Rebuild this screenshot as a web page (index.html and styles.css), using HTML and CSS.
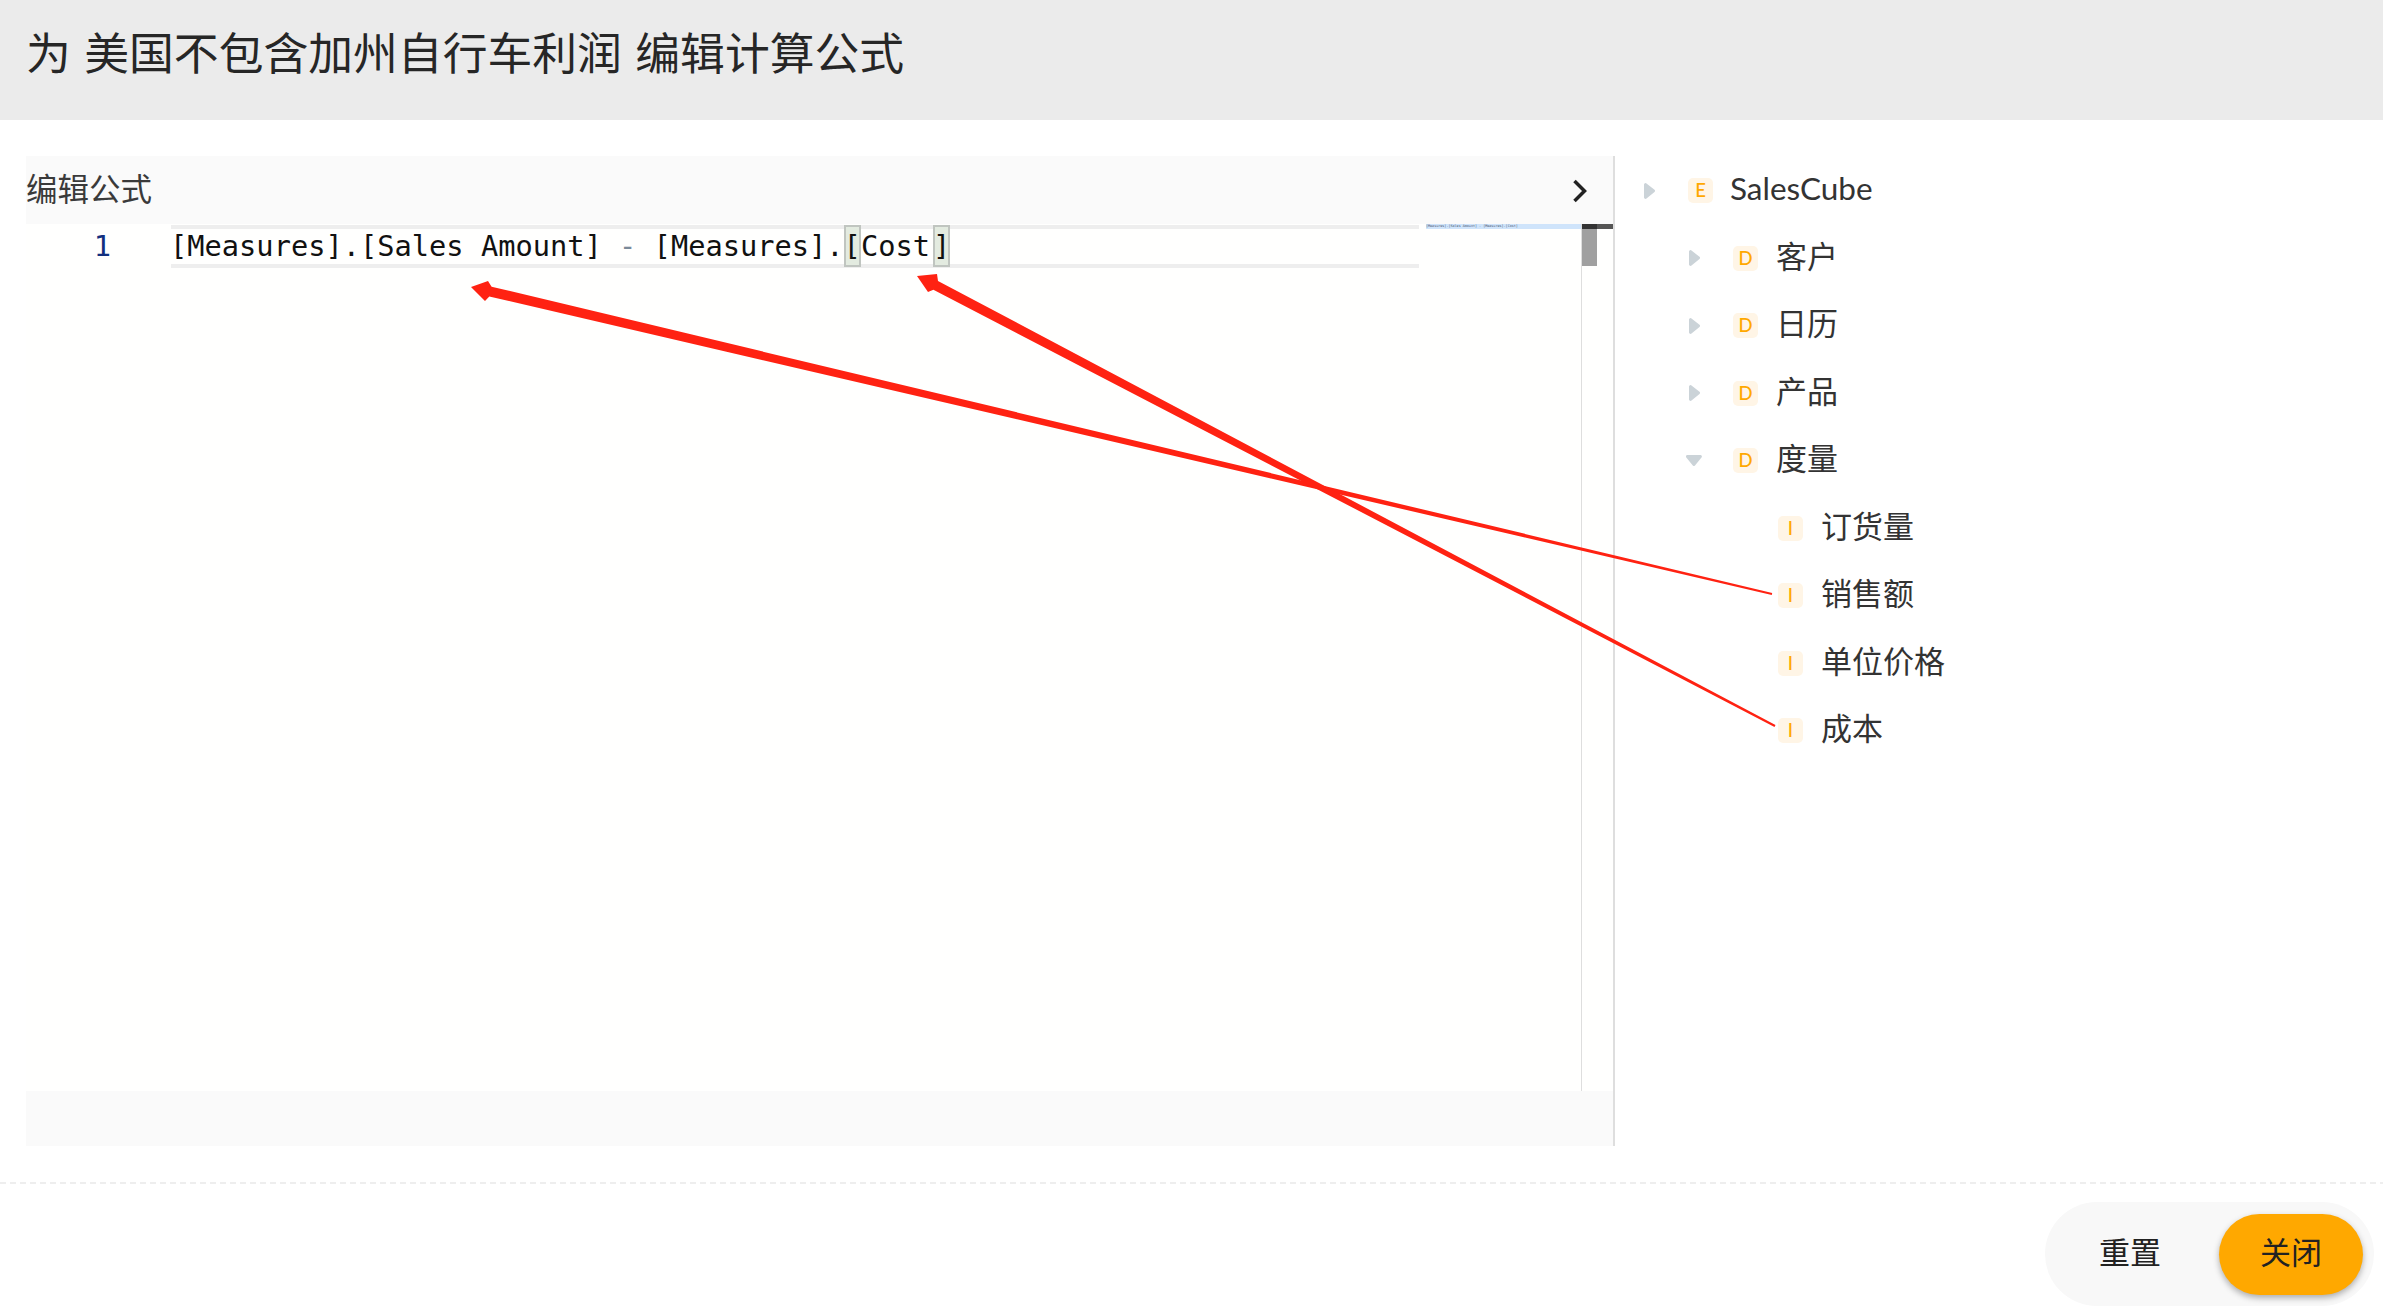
FILE: index.html
```html
<!DOCTYPE html>
<html lang="zh-CN">
<head>
<meta charset="utf-8">
<title>编辑计算公式</title>
<link rel="stylesheet" href="styles.css">
</head>
<body>
<div class="dialog">
  <header class="dialog-head">为 美国不包含加州自行车利润 编辑计算公式</header>
  <main class="dialog-main">
    <section class="editor-panel">
      <div class="editor-title">
        <span class="editor-label">编辑公式</span>
        <svg class="chevron" width="16" height="24" viewBox="0 0 16 24"><path d="M2.500 2l10 10-10 10" fill="none" stroke="#222" stroke-width="3.500"/></svg>
      </div>
      <div class="editor-body">
        <div class="gutter">1</div>
        <div class="code-area">
          <div class="code-line"><span>[Measures].[Sales Amount] </span><span class="op">-</span><span> [Measures].</span><span class="match">[</span><span>Cost</span><span class="match match-end">]</span></div>
        </div>
        <div class="minimap"><div class="minimap-line">[Measures].[Sales Amount] - [Measures].[Cost]</div></div>
        <div class="scrollbar">
          <div class="scroll-cap"><i></i></div>
          <div class="scroll-thumb"></div>
        </div>
      </div>
      <div class="editor-foot"></div>
    </section>
    <nav class="tree">
      <div class="row level-1"><span class="caret"><svg width="11" height="16" viewBox="0 0 11 16"><path d="M0 1.500v13a1.500 1.500 0 0 0 2.500 1l8-6.500a1.500 1.500 0 0 0 0-2.200l-8-6.300A1.500 1.500 0 0 0 0 1.500z" fill="#cbd3d8"/></svg></span><span class="badge">E</span><span class="name latin">SalesCube</span></div>
      <div class="row level-2"><span class="caret"><svg width="11" height="16" viewBox="0 0 11 16"><path d="M0 1.500v13a1.500 1.500 0 0 0 2.500 1l8-6.500a1.500 1.500 0 0 0 0-2.200l-8-6.300A1.500 1.500 0 0 0 0 1.500z" fill="#cbd3d8"/></svg></span><span class="badge">D</span><span class="name">客户</span></div>
      <div class="row level-2"><span class="caret"><svg width="11" height="16" viewBox="0 0 11 16"><path d="M0 1.500v13a1.500 1.500 0 0 0 2.500 1l8-6.500a1.500 1.500 0 0 0 0-2.200l-8-6.300A1.500 1.500 0 0 0 0 1.500z" fill="#cbd3d8"/></svg></span><span class="badge">D</span><span class="name">日历</span></div>
      <div class="row level-2"><span class="caret"><svg width="11" height="16" viewBox="0 0 11 16"><path d="M0 1.500v13a1.500 1.500 0 0 0 2.500 1l8-6.500a1.500 1.500 0 0 0 0-2.200l-8-6.300A1.500 1.500 0 0 0 0 1.500z" fill="#cbd3d8"/></svg></span><span class="badge">D</span><span class="name">产品</span></div>
      <div class="row level-2"><span class="caret"><svg class="down" width="16" height="11" viewBox="0 0 16 11"><path d="M1.500 0h13a1.500 1.500 0 0 1 1 2.500l-6.500 8a1.500 1.500 0 0 1-2.200 0L.3 2.500A1.500 1.500 0 0 1 1.500 0z" fill="#cbd3d8"/></svg></span><span class="badge">D</span><span class="name">度量</span></div>
      <div class="row level-3"><span class="caret"></span><span class="badge">I</span><span class="name">订货量</span></div>
      <div class="row level-3"><span class="caret"></span><span class="badge">I</span><span class="name">销售额</span></div>
      <div class="row level-3"><span class="caret"></span><span class="badge">I</span><span class="name">单位价格</span></div>
      <div class="row level-3"><span class="caret"></span><span class="badge">I</span><span class="name">成本</span></div>
    </nav>
  </main>
  <div class="dash"></div>
  <footer class="dialog-foot">
    <div class="btn-group">
      <button class="btn btn-reset"><span class="btn-text">重置</span></button>
      <button class="btn btn-close"><span class="btn-text">关闭</span></button>
    </div>
  </footer>
  <svg class="arrows" width="2383" height="1315" viewBox="0 0 2383 1315">
    <polygon fill="#ff2212" points="471,287 488,281 491.600,286.700 1772.200,593 1771.800,595 489.300,296.500 485,301"/>
    <polygon fill="#ff2212" points="917,276 937,274 938,280.900 1775.500,725.100 1774.500,726.900 933.400,289.700 928,292"/>
  </svg>
</div>
</body>
</html>
```
FILE: styles.css
```css
* { box-sizing: border-box; }
html, body { margin: 0; padding: 0; background: #fff; }
body {
  font-family: Lato, "Noto Sans CJK SC", sans-serif;
  color: #2b2b2b;
}
.dialog {
  position: relative;
  width: 2383px;
  height: 1315px;
  overflow: hidden;
  display: flex;
  flex-direction: column;
}
.dialog-head {
  height: 120px;
  flex: none;
  background: #ebebeb;
  padding: 0 0 20px 26px;
  display: flex;
  align-items: center;
  font-size: 44.800px;
  font-weight: 400;
  word-spacing: 2px;
  color: #262626;
  white-space: pre;
}
.dialog-main {
  flex: none;
  height: 990px;
  margin-top: 36px;
  display: flex;
}
.editor-panel {
  width: 1589px;
  margin-left: 26px;
  border-right: 2px solid #dedede;
  display: flex;
  flex-direction: column;
}
.editor-title {
  height: 68px;
  flex: none;
  background: #fafafa;
  display: flex;
  align-items: center;
  justify-content: space-between;
  padding: 0 25px 0 0;
  font-size: 31.500px;
  color: #3a3a3a;
}
.editor-label { margin-bottom: 7px; }
.chevron { margin-top: 1px; }
.editor-body {
  flex: 1;
  background: #fffffe;
  display: flex;
  min-height: 0;
}
.gutter {
  width: 145px;
  flex: none;
  padding: 5px 60px 0 0;
  text-align: right;
  font-family: "DejaVu Sans Mono", monospace;
  font-size: 28.700px;
  line-height: 34px;
  color: #12307f;
}
.code-area { width: 1248px; flex: none; }
.code-line {
  height: 43px;
  margin-top: 1px;
  border-top: 4px solid #eeeeee;
  border-bottom: 4px solid #eeeeee;
  font-family: "DejaVu Sans Mono", monospace;
  font-size: 28.700px;
  line-height: 34px;
  white-space: pre;
  color: #111;
  text-indent: -1px;
}
.op { color: #7a8a99; }
.match { position: relative; display: inline-block; z-index: 0; text-indent: 0; }
.match-end { margin-left: 3px; }
.match::before {
  content: "";
  position: absolute;
  z-index: -1;
  left: 0;
  right: 0;
  top: -4px;
  bottom: -4px;
  background: #e3ebe0;
  border: 2px solid #c0c5c0;
}
.minimap { width: 155px; flex: none; margin-left: 7px; }
.minimap-line {
  height: 5px;
  background: #cfe4fb;
  font-family: "DejaVu Sans Mono", monospace;
  font-size: 3.400px;
  line-height: 5px;
  color: #4a5670;
  white-space: pre;
}
.scrollbar {
  flex: 1;
  border-left: 1px solid #dedede;
}
.scroll-cap { height: 5px; background: #555; }
.scroll-cap i { display: block; width: 15px; height: 5px; background: #333; }
.scroll-thumb { width: 15px; height: 37px; background: #a0a0a0; }
.editor-foot { height: 55px; flex: none; background: #fafafa; }
.tree {
  flex: 1;
  padding: 1px 0 0 29px;
}
.row {
  height: 67.500px;
  display: flex;
  align-items: center;
  font-size: 31px;
  color: #333;
}
.level-2 { padding-left: 45px; }
.level-3 { padding-left: 90px; }
.caret {
  width: 44px;
  flex: none;
  display: flex;
  align-items: center;
}
.caret .down { margin-left: -3px; }
.badge {
  width: 25px;
  height: 25px;
  flex: none;
  border-radius: 5px;
  background: #fff5e6;
  color: #ffa800;
  font-family: Lato, sans-serif;
  font-size: 18.500px;
  font-weight: 500;
  line-height: 25px;
  text-align: center;
}
.name { margin: 0 0 8px 18px; }
.latin { font-size: 31.500px; margin: 0 0 6px 17px; }
.dash {
  height: 2px;
  flex: none;
  margin-top: 36px;
  background: repeating-linear-gradient(90deg, #eeeeee 0 6px, transparent 6px 10px);
}
.dialog-foot {
  flex: 1;
  display: flex;
  justify-content: flex-end;
  align-items: flex-start;
  padding: 18px 9px 0 0;
}
.btn-group {
  width: 329px;
  height: 104px;
  border-radius: 52px;
  background: #f8f8f8;
  display: flex;
  align-items: center;
  padding-right: 11px;
}
.btn {
  border: 0;
  font-family: inherit;
  font-size: 31px;
  color: #222;
  background: none;
  padding: 0 0 8px;
}
.btn-reset { width: 170px; height: 81px; margin-right: 4px; }
.btn-close {
  width: 144px;
  height: 81px;
  border-radius: 41px;
  background: #ffa800;
  box-shadow: 0 3px 6px rgba(0, 0, 0, .3);
}
.arrows {
  position: absolute;
  left: 0;
  top: 0;
  pointer-events: none;
}
```
